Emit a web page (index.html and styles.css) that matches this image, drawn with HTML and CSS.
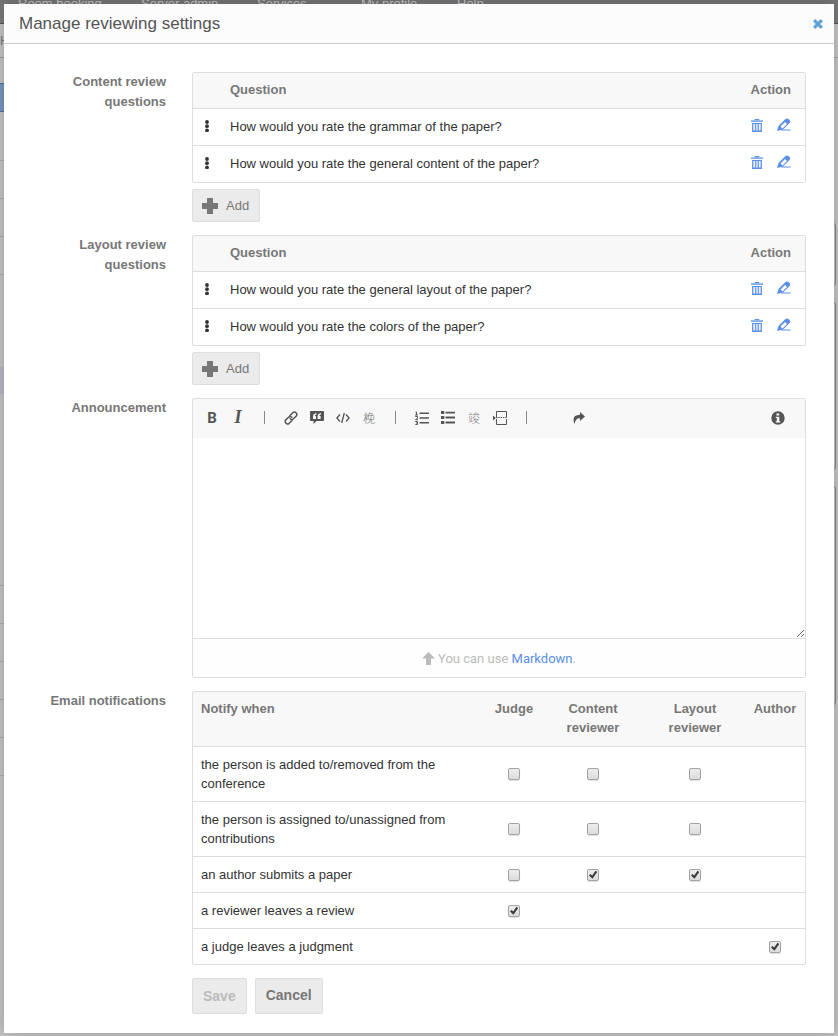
FILE: index.html
```html
<!DOCTYPE html>
<html lang="en">
<head>
<meta charset="utf-8">
<title>Manage reviewing settings</title>
<link rel="stylesheet" href="styles.css">
</head>
<body>
<svg class="sprite" aria-hidden="true">
  <symbol id="dots" viewBox="0 0 4 12"><circle cx="2" cy="2" r="1.900"/><circle cx="2" cy="6.200" r="1.900"/><circle cx="2" cy="10.400" r="1.900"/></symbol>
  <symbol id="trash" viewBox="0 0 13 14"><path d="M4 0h5v1.200H4z"/><path opacity=".75" d="M0 1.200h13v2H0z"/><path fill-rule="evenodd" d="M1.200 4.200h10.600V14H1.200zM2.600 5.500v7h1.600v-7zM5.200 5.500v7h2.600v-7zM8.800 5.500v7h1.600v-7z"/><path opacity=".4" d="M5.200 5.500h2.600v7H5.200z"/></symbol>
  <symbol id="pencil" viewBox="0 0 14 14"><path fill-rule="evenodd" d="M0 13 1.500 8 8.500 1Q10 0 11.500 1L13 2.500Q13.600 4 12.500 5L6 11.500zM3.500 8.500 5.500 10.500 10 6 8 4z"/><path opacity=".5" d="M5 11h8.500v2H4z"/></symbol>
  <symbol id="plus" viewBox="0 0 16 16"><path d="M5 0h6v5h5v6h-5v5H5v-5H0V5h5z"/></symbol>
  <symbol id="close" viewBox="0 0 10 10"><path d="M2.300 0 5 2.700 7.700 0 10 2.300 7.300 5 10 7.700 7.700 10 5 7.300 2.300 10 0 7.700 2.700 5 0 2.300z"/></symbol>
  <symbol id="link" viewBox="0 0 14 14"><g fill="none" stroke="currentColor" stroke-width="1.500" stroke-linecap="round"><path d="M6 4.500 8.800 1.700Q10.500.3 12 1.700T12.300 5L9.500 7.800Q7.800 9.300 6.200 7.800"/><path d="M8 9.500 5.200 12.300Q3.500 13.700 2 12.300T1.700 9L4.500 6.200Q6.200 4.700 7.800 6.200"/></g></symbol>
  <symbol id="quote" viewBox="0 0 14 13"><path fill-rule="evenodd" d="M1 0h12q1 0 1 1v8q0 1-1 1H6.500L3.500 13v-3H1q-1 0-1-1V1q0-1 1-1zM6.500 2Q3 2.500 3 5.500V8h3V5H4.700Q5 3.700 6.500 3.300zM11 2Q7.600 2.500 7.600 5.500V8h3V5H9.300Q9.500 3.700 11 3.300z"/></symbol>
  <symbol id="code" viewBox="0 0 14 12"><path fill="none" stroke="currentColor" stroke-width="1.300" d="M4 2.500.9 6 4 9.500M10 2.500 13.100 6 10 9.500M8.300 1 5.700 11"/></symbol>
  <symbol id="numbers" viewBox="0 0 14 14"><path d="M4.500 1.500H14V3H4.500zM4.500 6.300H14v1.500H4.500zM4.500 11H14v1.500H4.500z"/><path fill="none" stroke="currentColor" d="M.5 1h1v3M0 4h3M.3 5.500h2.200v1.700L.5 8.700H3M.3 10.500h2.200v3H.3M1 12h1.500"/></symbol>
  <symbol id="bullets" viewBox="0 0 14 13"><path d="M0 0h3.300v3H0zM4.500.7H14v1.800H4.500zM0 5h3.300v3H0zM4.500 5.600H14v1.800H4.500zM0 10h3.300v3H0zM4.500 10.600H14v1.800H4.500z"/></symbol>
  <symbol id="break" viewBox="0 0 14 14"><path d="M0 4.500 2.800 7 0 9.500z"/><path fill="none" stroke="currentColor" d="M3.500 6V.5h10V6M3.500 8v5.500h10V8"/><path fill="none" stroke="currentColor" stroke-dasharray="1.500 .8" d="M3 6.500h11"/></symbol>
  <symbol id="redo" viewBox="0 0 12 12"><path d="M7 0 12 4.500 7 9V6.300Q2.500 6 1.500 12-2 3 7 2.700z"/></symbol>
  <symbol id="info" viewBox="0 0 14 14"><path fill-rule="evenodd" d="M7 .3a6.700 6.700 0 1 0 0 13.400A6.700 6.700 0 1 0 7 .3zM5.500 2.500h2.700v2H5.500zM4.800 5.800h3.500v4.500h1v1.200H4.800v-1.200h1V7h-1z"/></symbol>
  <symbol id="up" viewBox="0 0 13 13"><path d="M6.500 0 13 6.500H9V13H4V6.500H0z"/></symbol>
</svg>

<div class="page" aria-hidden="true">
  <div class="topbar"><span>Room booking</span><span>Server admin</span><span class="menu">Services</span><span>My profile</span><span class="menu">Help</span></div>
  <div class="crumbs">H</div>
  <div class="columns">
    <div class="sidebar">
      <div class="side-active"></div>
      <div class="side-first"></div><div class="side-item"></div><div class="side-item"></div><div class="side-item"></div>
      <div class="side-gap"></div><div class="side-current"></div><div class="side-long"></div>
      <div class="side-item"></div><div class="side-item"></div><div class="side-item"></div><div class="side-item"></div><div class="side-item"></div>
    </div>
    <div class="cards"><div class="card small"></div><div class="card medium"></div><div class="card large"></div></div>
  </div>
</div>

<div class="dialog" role="dialog" aria-labelledby="title">
  <header class="dialog-head">
    <h1 id="title">Manage reviewing settings</h1>
    <button class="plain close" aria-label="Close"><svg width="10" height="10"><use href="#close"/></svg></button>
  </header>
  <form class="form">
    <div class="label" id="l-content">Content review questions</div>
    <div class="field">
      <div class="box">
        <table class="questions" aria-labelledby="l-content">
          <thead><tr><th class="handle"></th><th>Question</th><th class="action">Action</th></tr></thead>
          <tbody>
            <tr><td class="handle"><svg width="4" height="12"><use href="#dots"/></svg></td><td>How would you rate the grammar of the paper?</td><td class="action"><div class="tools"><button type="button" class="plain" aria-label="Delete"><svg width="12" height="13"><use href="#trash"/></svg></button><button type="button" class="plain" aria-label="Edit"><svg width="14" height="14"><use href="#pencil"/></svg></button></div></td></tr>
            <tr><td class="handle"><svg width="4" height="12"><use href="#dots"/></svg></td><td>How would you rate the general content of the paper?</td><td class="action"><div class="tools"><button type="button" class="plain" aria-label="Delete"><svg width="12" height="13"><use href="#trash"/></svg></button><button type="button" class="plain" aria-label="Edit"><svg width="14" height="14"><use href="#pencil"/></svg></button></div></td></tr>
          </tbody>
        </table>
      </div>
      <button type="button" class="btn add"><svg width="16" height="16"><use href="#plus"/></svg>Add</button>
    </div>

    <div class="label" id="l-layout">Layout review questions</div>
    <div class="field">
      <div class="box">
        <table class="questions" aria-labelledby="l-layout">
          <thead><tr><th class="handle"></th><th>Question</th><th class="action">Action</th></tr></thead>
          <tbody>
            <tr><td class="handle"><svg width="4" height="12"><use href="#dots"/></svg></td><td>How would you rate the general layout of the paper?</td><td class="action"><div class="tools"><button type="button" class="plain" aria-label="Delete"><svg width="12" height="13"><use href="#trash"/></svg></button><button type="button" class="plain" aria-label="Edit"><svg width="14" height="14"><use href="#pencil"/></svg></button></div></td></tr>
            <tr><td class="handle"><svg width="4" height="12"><use href="#dots"/></svg></td><td>How would you rate the colors of the paper?</td><td class="action"><div class="tools"><button type="button" class="plain" aria-label="Delete"><svg width="12" height="13"><use href="#trash"/></svg></button><button type="button" class="plain" aria-label="Edit"><svg width="14" height="14"><use href="#pencil"/></svg></button></div></td></tr>
          </tbody>
        </table>
      </div>
      <button type="button" class="btn add"><svg width="16" height="16"><use href="#plus"/></svg>Add</button>
    </div>

    <label class="label" for="announcement">Announcement</label>
    <div class="box">
      <div class="toolbar">
        <button type="button" class="plain tool bold">B</button>
        <button type="button" class="plain tool italic">I</button>
        <span class="sep"></span>
        <button type="button" class="plain tool" aria-label="Link"><svg width="14" height="14"><use href="#link"/></svg></button>
        <button type="button" class="plain tool" aria-label="Quote"><svg width="14" height="13"><use href="#quote"/></svg></button>
        <button type="button" class="plain tool" aria-label="Code"><svg width="14" height="12"><use href="#code"/></svg></button>
        <button type="button" class="plain tool cjk">梚</button>
        <span class="sep"></span>
        <button type="button" class="plain tool" aria-label="Numbered list"><svg width="14" height="14"><use href="#numbers"/></svg></button>
        <button type="button" class="plain tool" aria-label="Bulleted list"><svg width="14" height="13"><use href="#bullets"/></svg></button>
        <button type="button" class="plain tool cjk">竣</button>
        <button type="button" class="plain tool" aria-label="Page break"><svg width="14" height="14"><use href="#break"/></svg></button>
        <span class="sep"></span>
        <button type="button" class="plain tool" aria-label="Undo"></button>
        <button type="button" class="plain tool" aria-label="Redo"><svg width="12" height="12"><use href="#redo"/></svg></button>
        <button type="button" class="plain tool info" aria-label="Help"><svg width="14" height="14"><use href="#info"/></svg></button>
      </div>
      <textarea id="announcement"></textarea>
      <div class="hint"><svg width="13" height="13"><use href="#up"/></svg><span>You can use <a href="#">Markdown</a>.</span></div>
    </div>

    <div class="label" id="l-mail">Email notifications</div>
    <div class="box">
      <table class="notify" aria-labelledby="l-mail">
        <colgroup><col><col class="c-judge"><col class="c-content"><col class="c-layout"><col class="c-author"></colgroup>
        <thead><tr><th>Notify when</th><th>Judge</th><th>Content<br>reviewer</th><th>Layout<br>reviewer</th><th>Author</th></tr></thead>
        <tbody>
          <tr><td>the person is added to/removed from the conference</td><td><input type="checkbox" aria-label="Judge"></td><td><input type="checkbox" aria-label="Content reviewer"></td><td><input type="checkbox" aria-label="Layout reviewer"></td><td></td></tr>
          <tr><td>the person is assigned to/unassigned from contributions</td><td><input type="checkbox" aria-label="Judge"></td><td><input type="checkbox" aria-label="Content reviewer"></td><td><input type="checkbox" aria-label="Layout reviewer"></td><td></td></tr>
          <tr><td>an author submits a paper</td><td><input type="checkbox" aria-label="Judge"></td><td><input type="checkbox" checked aria-label="Content reviewer"></td><td><input type="checkbox" checked aria-label="Layout reviewer"></td><td></td></tr>
          <tr><td>a reviewer leaves a review</td><td><input type="checkbox" checked aria-label="Judge"></td><td></td><td></td><td></td></tr>
          <tr><td>a judge leaves a judgment</td><td></td><td></td><td></td><td><input type="checkbox" checked aria-label="Author"></td></tr>
        </tbody>
      </table>
    </div>

    <div class="buttons">
      <button class="btn save" disabled>Save</button>
      <button type="button" class="btn cancel">Cancel</button>
    </div>
  </form>
</div>
</body>
</html>
```

FILE: styles.css
```css
* { box-sizing: border-box; }
html { height: 100%; }
body {
  margin: 0;
  min-height: 100%;
  padding: 4px 4px 3px;
  background: #c4c4c4;
  color: #333;
  font: 13px/19px "Liberation Sans", Arial, sans-serif;
}
svg { fill: currentColor; display: block; flex: none; overflow: visible; }
.sprite { position: absolute; width: 0; height: 0; }

/* dimmed page under the dialog */
.page { position: absolute; inset: 0; overflow: hidden; color: #c4c4c4; }
.topbar {
  height: 24px;
  display: grid;
  grid-template-columns: 123px 116px 104px 96px auto;
  padding-left: 18px;
  background: linear-gradient(#757575, #7c7c7c);
  border-bottom: 1px solid #555;
  line-height: 7px;
}
.menu { display: flex; gap: 7px; }
.menu::after { content: ""; width: 6px; height: 4px; border-bottom: 1px solid #c4c4c4; }
.crumbs { height: 34px; border-bottom: 1px solid #9e9e9e; color: #777; line-height: 34px; }
.columns { display: flex; justify-content: space-between; padding-right: 2px; }
.sidebar { width: 180px; padding-top: 25px; }
.side-active { height: 29px; background: #7b96c0; border: solid #47729c; border-width: 1px 0; }
.side-first { height: 49px; border-bottom: 1px solid #aaa; }
.side-item { height: 38px; border-bottom: 1px solid #aaa; }
.side-gap { height: 92px; }
.side-current { height: 27px; background: #b9b9c6; }
.side-long { height: 192px; border-bottom: 1px solid #aaa; }
.cards { width: 600px; padding-top: 165px; display: flex; flex-direction: column; gap: 16px; }
.card { border: 1px solid #8a8a8a; border-radius: 3px; }
.small { height: 63px; }
.medium { height: 168px; }
.large { height: 219px; }

.dialog { position: relative; background: #fff; box-shadow: 0 0 14px rgba(0, 0, 0, .22); }
.dialog-head {
  display: flex;
  align-items: center;
  justify-content: space-between;
  height: 40px;
  padding: 0 11px 0 15px;
  background: #fcfcfc;
  border-bottom: 1px solid #ccc;
}
h1 { margin: 0; font-size: 17px; font-weight: normal; color: #555; }
.plain { border: 0; padding: 0; background: none; color: inherit; font: inherit; cursor: pointer; }
.close { color: #5fa3d6; }

.form {
  display: grid;
  grid-template-columns: 162px minmax(0, 1fr);
  gap: 13px 26px;
  padding: 28px 28px 19px 0;
}
.label { padding-left: 40px; text-align: right; font-weight: bold; line-height: 20px; color: #777; }
.field { display: flex; flex-direction: column; align-items: flex-start; gap: 6px; }
.box { width: 100%; border: 1px solid #ddd; border-radius: 2px; overflow: hidden; }

table { width: 100%; border-collapse: separate; border-spacing: 0; }
th { padding: 7px 8px 9px; background: #f8f8f8; color: #777; text-align: left; vertical-align: top; }
td { padding: 8px; border-top: 1px solid #ddd; }
.questions th { padding: 7px 0 9px; }
.questions td { height: 37px; padding: 7px 0 9px; }
.questions .handle { width: 37px; padding-left: 12px; }
.questions .action { width: 69px; padding-right: 14px; text-align: right; }
.questions td.action { padding-top: 6px; padding-bottom: 10px; }
.tools { display: flex; align-items: center; justify-content: flex-end; gap: 14px; color: #5a8fe8; }

.btn {
  display: flex;
  align-items: center;
  border: 1px solid #ddd;
  border-radius: 2px;
  background: #ebebeb;
  color: #777;
  font: 13px/19px "Liberation Sans", Arial, sans-serif;
}
.add { height: 33px; gap: 8px; padding: 0 10px 0 9px; }
.buttons { grid-column: 2; display: flex; gap: 8px; }
.save, .cancel { height: 36px; padding: 0 10px; font-size: 14px; font-weight: bold; }
.cancel { padding-bottom: 2px; }
.save { color: #bbb; }

.toolbar { display: flex; align-items: center; height: 39px; padding: 0 14px 2px 6px; background: #f8f8f8; color: #555; }
.tool { width: 26px; height: 26px; display: flex; align-items: center; justify-content: center; }
.bold { font: bold 15px Roboto, sans-serif; }
.italic { font: italic bold 18px "Liberation Serif", serif; }
.cjk { font: 300 12px "Noto Sans CJK SC", sans-serif; color: #777; }
.sep { width: 27px; height: 13px; background: linear-gradient(#888, #888) center / 1px 100% no-repeat; }
.info { margin-left: auto; }
textarea { display: block; width: 100%; height: 200px; padding: 8px; border: 0; resize: vertical; outline: 0; background: #fff; }
.hint {
  display: flex;
  align-items: center;
  justify-content: center;
  gap: 3px;
  height: 39px;
  border-top: 1px solid #ddd;
  background: #fefefe;
  color: #bbb;
  font-family: Roboto, sans-serif;
}
.hint a { color: #5a8fe8; text-decoration: none; }

.notify { table-layout: fixed; }
.c-judge { width: 54px; }
.c-content { width: 104px; }
.c-layout { width: 100px; }
.c-author { width: 60px; }
.notify th + th, .notify td + td { padding-left: 0; padding-right: 0; text-align: center; }
input[type="checkbox"] {
  appearance: none;
  display: block;
  width: 12px;
  height: 12px;
  margin: 0 auto;
  border: 1px solid #a3a3a3;
  border-radius: 2px;
  background: linear-gradient(#ededed, #dcdcdc);
  box-shadow: 0 1px 1px rgba(0, 0, 0, .12);
}
input[type="checkbox"]:checked::before {
  content: "";
  display: block;
  width: 10px;
  height: 10px;
  background: #3c3c3c;
  clip-path: polygon(10% 60%, 25% 45%, 42% 60%, 75% 12%, 92% 26%, 45% 92%);
}
```
